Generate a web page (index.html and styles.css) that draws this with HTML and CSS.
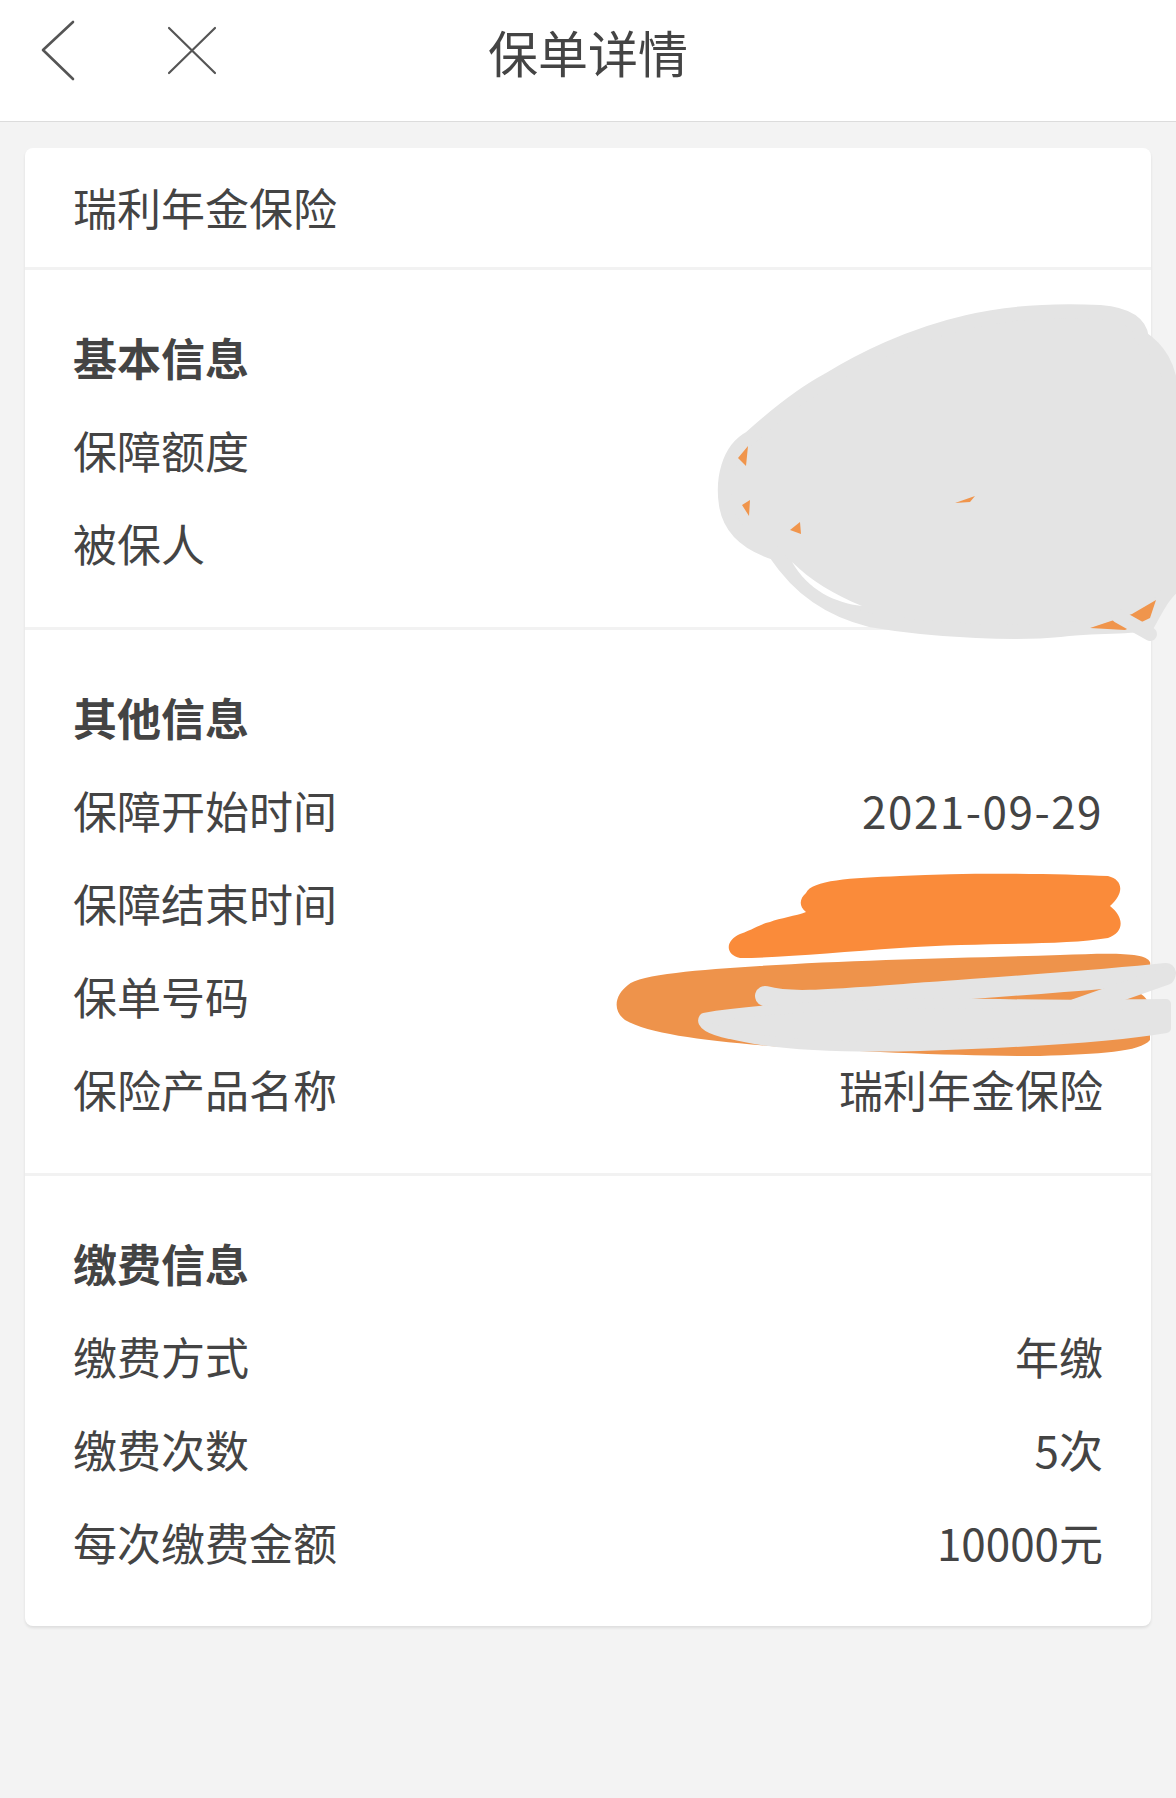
FILE: index.html
```html
<!DOCTYPE html>
<html lang="zh-CN">

<head>
  <meta charset="UTF-8">
  <meta name="viewport" content="width=device-width, initial-scale=1.0">
  <title>保单详情</title>
  <link rel="stylesheet" href="styles.css">
</head>

<body>
  <div class="page">
    <header class="top-bar">
      <div class="top-bar-icons">
        <svg class="icon-back" viewBox="0 0 36 62" width="36" height="62">
          <path d="M33 2 L3 30 L33 59" fill="none" stroke="#555" stroke-width="2.6" stroke-linecap="round" stroke-linejoin="round"/>
        </svg>
        <svg class="icon-close" viewBox="0 0 52 52" width="52" height="52">
          <path d="M3 3 L49 48 M49 3 L3 48" fill="none" stroke="#555" stroke-width="2.2" stroke-linecap="round"/>
        </svg>
      </div>
      <h1 class="top-bar-title">保单详情</h1>
      <div></div>
    </header>

    <div class="card">
      <div class="card-name">瑞利年金保险</div>

      <div class="card-section">
        <div class="section-title">基本信息</div>
        <div class="row"><span>保障额度</span><span></span></div>
        <div class="row"><span>被保人</span><span></span></div>
      </div>

      <div class="card-section">
        <div class="section-title">其他信息</div>
        <div class="row"><span>保障开始时间</span><span class="date">2021-09-29</span></div>
        <div class="row"><span>保障结束时间</span><span></span></div>
        <div class="row"><span>保单号码</span><span></span></div>
        <div class="row"><span>保险产品名称</span><span>瑞利年金保险</span></div>
      </div>

      <div class="card-section">
        <div class="section-title">缴费信息</div>
        <div class="row"><span>缴费方式</span><span>年缴</span></div>
        <div class="row"><span>缴费次数</span><span>5次</span></div>
        <div class="row"><span>每次缴费金额</span><span>10000元</span></div>
      </div>
    </div>

    <!-- hand-drawn redaction marks over the screenshot -->
    <svg class="scribbles" viewBox="0 0 1176 1798" width="1176" height="1798">
      <!-- basic info blob -->
      <path d="M828 380 C 860 360, 910 335, 967 322 C 1010 312, 1060 310, 1100 312 C 1125 314, 1140 322, 1142 338 C 1160 350, 1168 366, 1172 390 L 1172 588 C 1162 596, 1156 610, 1148 624 C 1120 628, 1090 626, 1060 630 C 1020 634, 940 632, 870 620 C 830 610, 800 590, 775 553 C 750 545, 730 530, 726 505 C 722 480, 728 450, 750 438 C 770 420, 800 395, 828 380 Z" fill="#e4e4e4" stroke="#e4e4e4" stroke-width="14" stroke-linejoin="round"/>
      <path d="M792 562 C 810 580, 835 595, 862 606 C 835 603, 808 590, 792 562 Z" fill="#fff"/>
      <path d="M738 458 L748 446 L746 466 Z M742 505 L750 500 L749 516 Z M790 530 L800 522 L801 534 Z M955 503 L975 496 L970 502 Z M1090 628 L1132 614 L1156 600 L1150 618 L1125 630 Z" fill="#f0954c"/>
      <path d="M1118 616 L1150 634" stroke="#e4e4e4" stroke-width="14" stroke-linecap="round"/>

      <!-- end date -->
      <path d="M806 893 C 812 880, 850 878, 900 876 C 980 872, 1060 874, 1108 876 C 1124 880, 1124 894, 1110 906 C 1125 918, 1124 932, 1108 938 C 1060 946, 980 942, 900 948 C 840 952, 780 958, 740 958 C 724 954, 726 940, 740 934 C 756 928, 760 924, 770 922 C 780 918, 796 916, 806 912 C 798 906, 800 898, 806 893 Z" fill="#fa8b3a"/>

      <!-- policy number -->
      <path d="M628 985 C 640 974, 700 970, 760 966 C 850 960, 960 958, 1060 955 C 1110 953, 1146 952, 1150 962 C 1152 972, 1140 978, 1120 984 C 1140 990, 1152 1000, 1150 1012 L 1150 1040 C 1140 1052, 1100 1054, 1040 1056 C 960 1056, 860 1052, 770 1046 C 700 1040, 650 1034, 625 1020 C 612 1010, 615 995, 628 985 Z" fill="#ee934b"/>
      <path d="M765 996 C 790 1003, 820 1000, 930 992 S 1100 980, 1166 973" fill="none" stroke="#e4e4e4" stroke-width="20" stroke-linecap="round"/>
      <path d="M1075 1008 L1166 976" fill="none" stroke="#e4e4e4" stroke-width="18" stroke-linecap="round"/>
      <path d="M704 1018 C 760 1008, 880 1002, 1000 1004 C 1080 1006, 1130 1004, 1166 1004 L 1166 1028 C 1120 1036, 1040 1042, 920 1046 C 840 1048, 770 1044, 730 1034 C 710 1030, 700 1024, 704 1018 Z" fill="#e4e4e4" stroke="#e4e4e4" stroke-width="10" stroke-linejoin="round"/>
    </svg>
  </div>
</body>

</html>
```

FILE: styles.css
```css
* {
  box-sizing: border-box;
}

body {
  margin: 0;
  background-color: #f3f3f3;
  color: #444444;
  font-family: "Noto Sans CJK SC", "Noto Sans", sans-serif;
}

.page {
  position: relative;
  width: 1176px;
  min-height: 1798px;
}

.top-bar {
  display: grid;
  grid-template-columns: 1fr auto 1fr;
  align-items: center;
  height: 122px;
  padding-bottom: 15px;
  background-color: #ffffff;
  border-bottom: 1px solid #dcdcdc;
}

.top-bar-icons {
  display: flex;
  align-items: center;
  padding-left: 40px;
  margin-bottom: 5px;
}

.icon-close {
  margin-left: 90px;
}

.top-bar-title {
  margin: 0 0 5px;
  font-size: 50px;
  font-weight: normal;
  line-height: 102px;
  color: #444444;
}

.card {
  margin: 26px 25px 0;
  background-color: #ffffff;
  border-radius: 8px;
  box-shadow: 0 2px 3px rgba(0, 0, 0, 0.09);
  overflow: hidden;
}

.card-name {
  height: 119px;
  padding: 0 48px;
  font-size: 44px;
  line-height: 119px;
}

.card-section {
  padding: 41px 48px 37px;
  border-top: 3px solid #f2f2f2;
}

.section-title,
.row {
  height: 93px;
  font-size: 44px;
  line-height: 93px;
}

.section-title {
  font-weight: bold;
}

.row {
  display: flex;
  justify-content: space-between;
}

.date {
  letter-spacing: 1.5px;
}

.scribbles {
  position: absolute;
  top: 0;
  left: 0;
  pointer-events: none;
}
```
